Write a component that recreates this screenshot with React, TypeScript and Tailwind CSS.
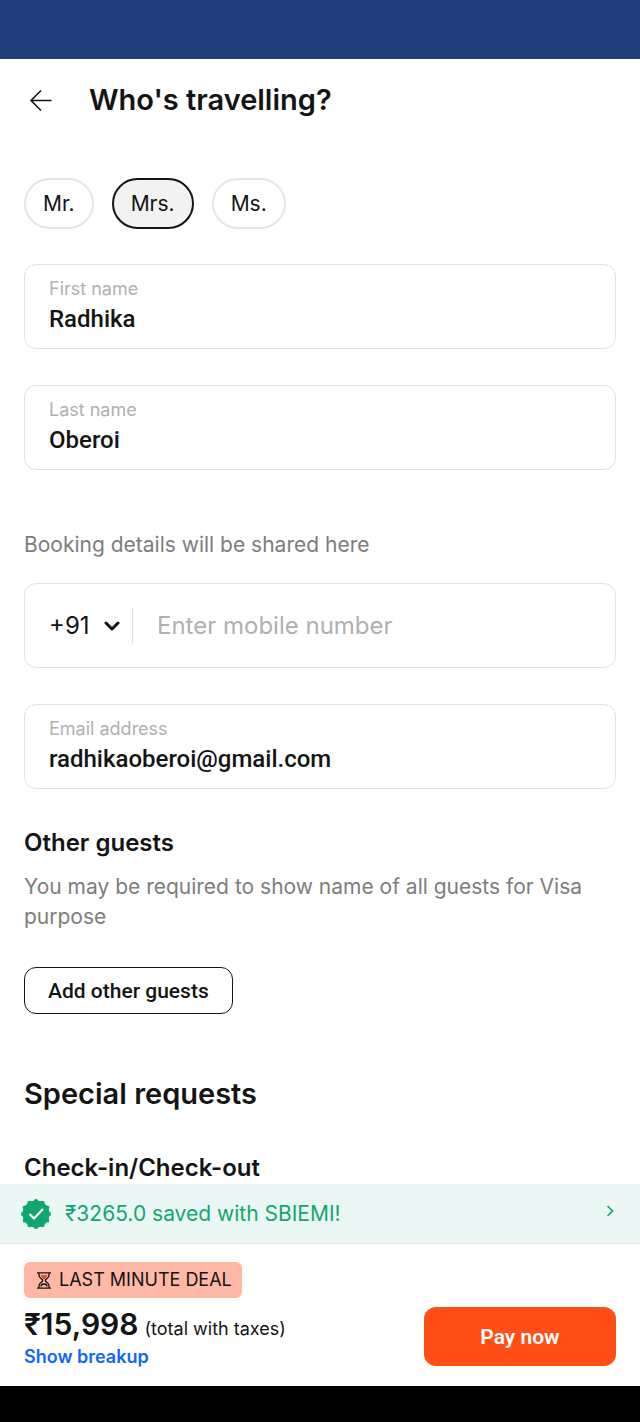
import { useState } from "react";

const titles = ["Mr.", "Mrs.", "Ms."];

type FieldProps = {
  id: string;
  label: string;
  type?: string;
  defaultValue: string;
};

const Field = ({ id, label, type = "text", defaultValue }: FieldProps) => (
  <div className="flex h-[85px] flex-col rounded-xl border border-[#e2e2e2] px-6 pt-[10px]">
    <label htmlFor={id} className="text-[18px] leading-7 text-[#b0b0b0]">
      {label}
    </label>
    <input
      id={id}
      type={type}
      defaultValue={defaultValue}
      className="h-8 w-full bg-transparent font-['Roboto',sans-serif] text-[24px] leading-8 font-medium text-[#141414] outline-none"
    />
  </div>
);

const TitlePicker = () => {
  const [selected, setSelected] = useState("Mrs.");

  return (
    <div role="radiogroup" aria-label="Title" className="flex gap-[18px]">
      {titles.map((title) => (
        <label
          key={title}
          className="flex h-[51px] cursor-pointer items-center rounded-[26px] border-2 border-[#e6e6e6] px-[17px] text-[21px] leading-7 has-checked:border-[#141414] has-checked:bg-[#f2f2f2]"
        >
          <input
            type="radio"
            name="title"
            value={title}
            checked={selected === title}
            onChange={() => setSelected(title)}
            className="appearance-none"
          />
          {title}
        </label>
      ))}
    </div>
  );
};

const BackIcon = () => (
  <svg width="24" height="24" viewBox="0 0 24 24" fill="none" stroke="currentColor" strokeWidth="1.6">
    <path d="M23.5 12.5H3M13 2.5l-10 10 10 10" />
  </svg>
);

const VerifiedIcon = () => {
  const points = Array.from({ length: 12 }).map((_, i) => {
    const a = (i * Math.PI) / 6;
    return { x: 15 + 12.8 * Math.sin(a), y: 15 - 12.8 * Math.cos(a) };
  });

  return (
    <svg width="30" height="30" viewBox="0 0 30 30">
      <g fill="#12a670">
        <circle cx="15" cy="15" r="13.5" />
        {points.map((p, i) => (
          <circle key={i} cx={p.x} cy={p.y} r="2.2" />
        ))}
      </g>
      <path d="M8.5 15l4.5 4.5 9-9.5" fill="none" stroke="#fff" strokeWidth="2.2" />
    </svg>
  );
};

const HourglassIcon = () => (
  <svg width="14" height="17" viewBox="0 0 14 17" fill="none" stroke="#141414" strokeWidth="1.3">
    <path d="M0 .8h14M0 16.2h14M2 .8v2.7c0 2.5 3.7 3.3 3.7 5s-3.7 2.5-3.7 5v2.7M12 .8v2.7c0 2.5-3.7 3.3-3.7 5s3.7 2.5 3.7 5v2.7" />
    <path d="M4 3.5h6L7 7.5z" fill="#ff4f17" stroke="#a83a1a" strokeWidth=".6" />
    <path d="M4 14.5c0-2 1.5-2.5 3-2.5s3 .5 3 2.5" />
  </svg>
);

export default function App() {
  return (
    <div className="flex h-screen flex-col bg-white font-['Inter',sans-serif] text-[#141414]">
      <div className="h-[59px] shrink-0 bg-[#1f3d7a]" />

      <header className="flex h-[82px] shrink-0 items-center gap-[37px] pl-[28px]">
        <button type="button" aria-label="Back">
          <BackIcon />
        </button>
        <h1 className="text-[29px] leading-10 font-semibold">Who's travelling?</h1>
      </header>

      <main className="min-h-0 flex-1 overflow-hidden px-6 pt-[37px]">
        <TitlePicker />

        <div className="mt-[35px] flex flex-col gap-9">
          <Field id="first-name" label="First name" defaultValue="Radhika" />
          <Field id="last-name" label="Last name" defaultValue="Oberoi" />
        </div>

        <p className="mt-[60px] text-[21px] leading-[30px] text-[#7d7d7d]">
          Booking details will be shared here
        </p>

        <div className="mt-[23px] flex flex-col gap-9">
          <div className="flex h-[85px] items-center rounded-xl border border-[#e2e2e2] px-6">
            <div className="grid w-[71px] items-center">
              <select
                aria-label="Country code"
                defaultValue="+91"
                className="col-start-1 row-start-1 appearance-none bg-transparent text-[24px] leading-8 outline-none"
              >
                <option>+91</option>
                <option>+1</option>
                <option>+44</option>
              </select>
              <svg
                width="16"
                height="10"
                viewBox="0 0 16 10"
                className="pointer-events-none col-start-1 row-start-1 justify-self-end"
                fill="none"
                stroke="currentColor"
                strokeWidth="3"
                strokeLinecap="round"
                strokeLinejoin="round"
              >
                <path d="M2 2l6 6 6-6" />
              </svg>
            </div>
            <div className="ml-3 h-9 w-px bg-[#e0e0e0]" />
            <input
              type="tel"
              aria-label="Mobile number"
              placeholder="Enter mobile number"
              className="ml-6 min-w-0 flex-1 bg-transparent text-[24px] leading-8 outline-none placeholder:text-[#b0b0b0]"
            />
          </div>
          <Field id="email" label="Email address" type="email" defaultValue="radhikaoberoi@gmail.com" />
        </div>

        <h2 className="mt-[38px] text-[24px] leading-8 font-semibold">Other guests</h2>
        <p className="mt-[13px] text-[21px] leading-[30px] text-[#7d7d7d]">
          You may be required to show name of all guests for Visa purpose
        </p>
        <button
          type="button"
          className="mt-[35px] block h-[47px] rounded-xl border border-[#141414] px-[23px] font-['Roboto',sans-serif] text-[21px] leading-7 font-medium"
        >
          Add other guests
        </button>

        <h2 className="mt-[60px] text-[29px] leading-10 font-semibold">Special requests</h2>
        <h3 className="mt-[38px] text-[24px] leading-8 font-semibold">Check-in/Check-out</h3>
      </main>

      <footer className="shrink-0">
        <button
          type="button"
          className="flex h-[60px] w-full items-center border-b border-[#dfe5e3] bg-[#ebf7f4] pr-[26px] pl-[21px] text-left text-[21px] leading-7 text-[#12a670]"
        >
          <VerifiedIcon />
          <span className="ml-[14px] flex-1">₹3265.0 saved with SBIEMI!</span>
          <svg width="8" height="18" viewBox="0 0 8 18" fill="none" stroke="currentColor" strokeWidth="1.6">
            <path d="M1.5 1l5 5-5 5" />
          </svg>
        </button>

        <div className="flex items-end justify-between px-6 pt-[18px] pb-4">
          <div>
            <div className="flex h-9 w-fit items-center gap-2 rounded-md bg-[#ffb8a6] pr-[10px] pl-[13px] text-[18px] leading-6">
              <HourglassIcon />
              LAST MINUTE DEAL
            </div>
            <div className="mt-[6px] flex items-baseline gap-[6px]">
              <span className="text-[30px] leading-10 font-semibold">₹15,998</span>
              <span className="text-[18px] leading-6">(total with taxes)</span>
            </div>
            <button type="button" className="block text-[18px] leading-[26px] font-semibold text-[#0f66ff]">
              Show breakup
            </button>
          </div>
          <button
            type="button"
            className="mb-1 h-[59px] w-48 rounded-xl bg-[#ff4f17] font-['Roboto',sans-serif] text-[21px] leading-7 font-semibold text-white"
          >
            Pay now
          </button>
        </div>
        <div className="h-9 bg-black" />
      </footer>
    </div>
  );
}
